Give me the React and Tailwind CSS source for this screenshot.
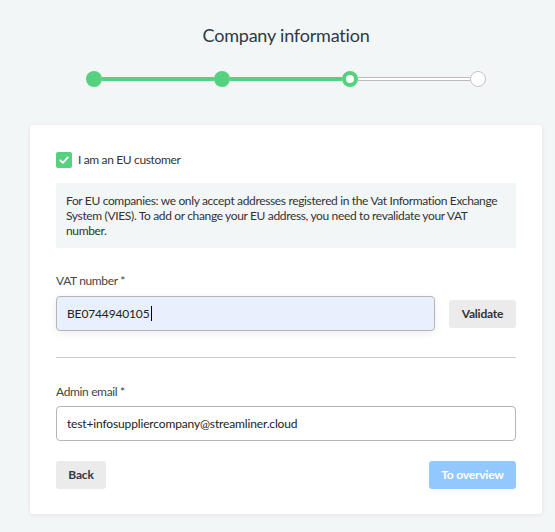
export default function App() {
  const font = { fontFamily: "Lato, 'Open Sans', sans-serif" };
  return (
    <div className="min-h-[532px] w-full bg-[#f3f6f7] text-[#333]" style={font}>
      <div className="ml-[30px] w-[512px] pt-[22px] pb-[17px]">
        <h1 className="text-center text-[18px] leading-[26px] tracking-[-0.2px] text-[#2b3a45]">Company information</h1>
        <div className="mx-auto mt-[23px] flex w-[400px] items-center">
          <div className="h-4 w-4 rounded-full bg-[#55d17f]" />
          <div className="h-1 flex-1 bg-[#55d17f]" />
          <div className="h-4 w-4 rounded-full bg-[#55d17f]" />
          <div className="h-1 flex-1 bg-[#55d17f]" />
          <div className="h-4 w-4 rounded-full border-[4px] border-[#55d17f] bg-white" />
          <div className="h-1 flex-1 border-y border-[#bbb] bg-white" />
          <div className="h-4 w-4 rounded-full border border-[#c4c4c4] bg-white" />
        </div>
        <div className="mt-[38px] rounded-[3px] bg-white px-[26px] pt-[26px] pb-[25px] tracking-[-0.35px] shadow-[0_1px_4px_rgba(0,0,0,0.08)]">
          <label className="flex items-center gap-[6px]">
            <span className="flex h-4 w-4 items-center justify-center rounded-[2px] bg-[#55d17f]">
              <svg width="12" height="12" viewBox="0 0 12 12" fill="none">
                <path d="M2.2 6.3 L4.8 8.8 L9.8 3.4" stroke="white" strokeWidth="1.8" strokeLinecap="round" strokeLinejoin="round" />
              </svg>
            </span>
            <span className="text-[12px] text-[#333]">I am an EU customer</span>
          </label>
          <div className="mt-[14px] bg-[#f3f6f7] px-[10px] pt-[10px] pb-[10px] text-[12px] leading-[15px] text-[#333]">
            For EU companies: we only accept addresses registered in the Vat Information Exchange System (VIES). To add or change your EU address, you need to revalidate your VAT number.
          </div>
          <div className="mt-[25px] text-[12px] leading-[16px] text-[#444]">VAT number *</div>
          <div className="mt-[7px] flex items-center gap-[14px]">
            <div className="flex h-[35px] flex-1 items-center rounded-[4px] border border-[#b5b5b5] bg-[#e8f0fe] px-[10px] text-[12px] tracking-[-0.15px] text-[#222] shadow-[0_2px_8px_rgba(0,0,0,0.08)]">
              BE0744940105<span className="ml-px inline-block h-[15px] w-px bg-black" />
            </div>
            <button className="h-[28px] w-[67px] rounded-[3px] bg-[#ebebeb] text-[12px] font-bold tracking-[-0.2px] text-[#333]">Validate</button>
          </div>
          <div className="mt-[26px] h-px bg-[#cfcfcf]" />
          <div className="mt-[26px] text-[12px] leading-[16px] text-[#444]">Admin email *</div>
          <div className="mt-[6px] flex h-[35px] items-center rounded-[4px] border border-[#b5b5b5] bg-white px-[10px] text-[12px] tracking-[-0.15px] text-[#222]">
            test+infosuppliercompany@streamliner.cloud
          </div>
          <div className="mt-[20px] flex items-center justify-between">
            <button className="h-[28px] w-[50px] rounded-[3px] bg-[#ebebeb] text-[12px] font-bold tracking-[-0.2px] text-[#2b3a45]">Back</button>
            <button className="h-[28px] w-[87px] rounded-[3px] bg-[#93c8ff] text-[12px] font-bold tracking-[-0.2px] text-white">To overview</button>
          </div>
        </div>
      </div>
    </div>
  );
}
